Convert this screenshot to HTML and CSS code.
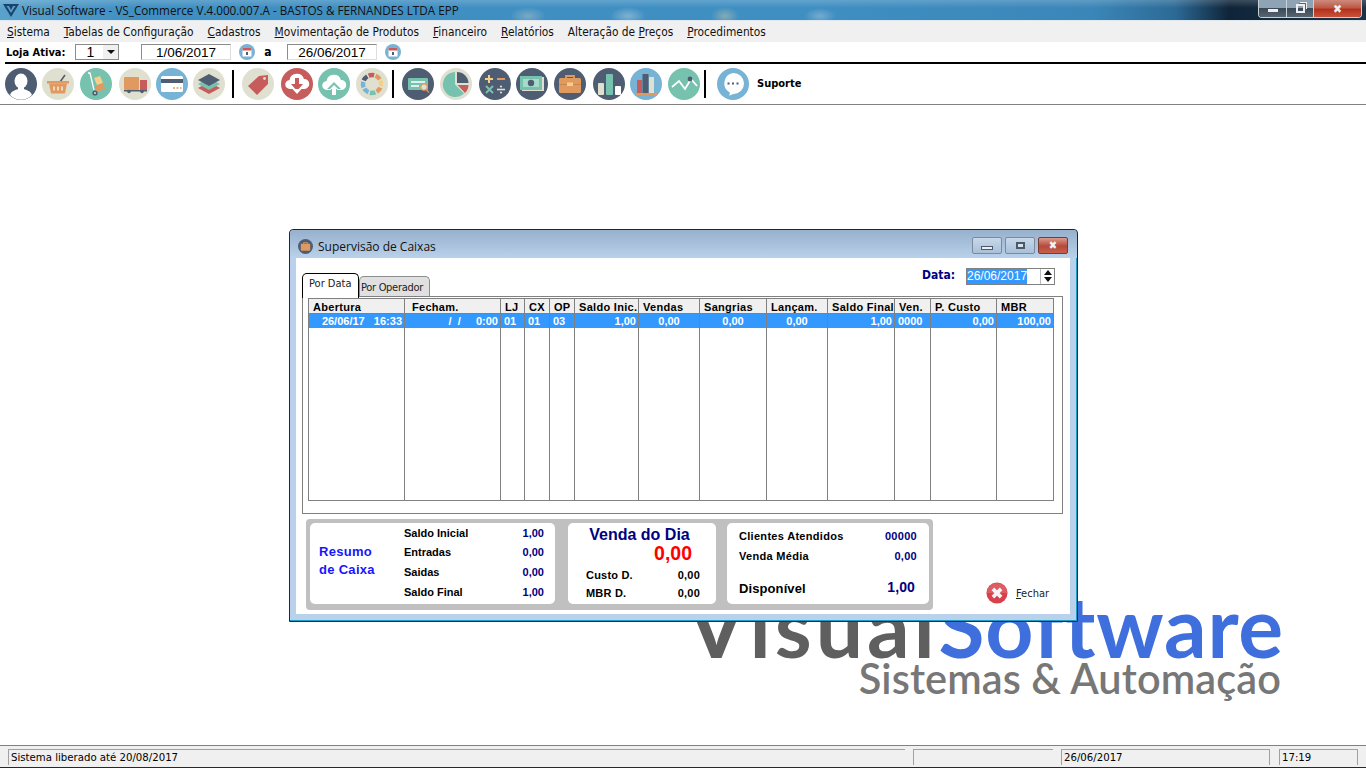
FILE: index.html
```html
<!DOCTYPE html>
<html lang="en">
<head>
    <meta charset="UTF-8">
    <title>Visual Software - VS_Commerce</title>
    <link rel="stylesheet" href="styles.css">
</head>
<body>
    <!-- Main window chrome -->
    <div class="titlebar">
        <svg class="app-logo" viewBox="0 0 16 14"><path d="M0 1h16L8 14z" fill="#16456e"/><path d="M3.500 3h9L8 10z" fill="#5f9cc6"/><path d="M6 3h4L8 7z" fill="#16456e"/></svg>
        <span class="app-title">Visual Software - VS_Commerce V.4.000.007.A - BASTOS &amp; FERNANDES LTDA EPP</span>
        <div class="caption-btns">
            <div class="cap-btn cap-min"><span class="min-glyph"></span></div>
            <div class="cap-btn cap-max"><span class="max-glyph"></span></div>
            <div class="cap-btn cap-close">&#10006;</div>
        </div>
    </div>
    <div class="menubar">
        <span><u>S</u>istema</span>
        <span><u>T</u>abelas de Configuração</span>
        <span><u>C</u>adastros</span>
        <span><u>M</u>ovimentação de Produtos</span>
        <span><u>F</u>inanceiro</span>
        <span><u>R</u>elatórios</span>
        <span>Alteração de <u>P</u>reços</span>
        <span><u>P</u>rocedimentos</span>
    </div>
    <div class="datebar">
        <span class="loja-label">Loja Ativa:</span>
        <div class="combo"><span class="combo-val">1</span><span class="combo-btn"><span class="combo-arrow"></span></span></div>
        <div class="date-input date-first">1/06/2017</div>
        <svg class="cal-icon" viewBox="0 0 16 16"><circle cx="8" cy="8" r="8" fill="#77b3d4"/><rect x="3.500" y="4" width="9" height="8.500" fill="#fff"/><rect x="3.500" y="4" width="9" height="2.500" fill="#c75c5c"/><rect x="7" y="8" width="2" height="3" fill="#4f5d73"/></svg>
        <span class="date-sep">a</span>
        <div class="date-input">26/06/2017</div>
        <svg class="cal-icon" viewBox="0 0 16 16"><circle cx="8" cy="8" r="8" fill="#77b3d4"/><rect x="3.500" y="4" width="9" height="8.500" fill="#fff"/><rect x="3.500" y="4" width="9" height="2.500" fill="#c75c5c"/><rect x="7" y="8" width="2" height="3" fill="#4f5d73"/></svg>
    </div>
    <div class="toolbar-rule"></div>
    <div class="toolbar">
        <!-- user -->
        <svg class="tool gap-5" viewBox="0 0 32 32"><circle cx="16" cy="16" r="16" fill="#4f5d73"/><ellipse cx="16" cy="13" rx="6.500" ry="7.500" fill="#fff"/><path d="M5 27c1-4 6-5 8-6v-3h6v3c2 1 7 2 8 6a15 15 0 0 1-22 0z" fill="#fff"/></svg>
        <!-- basket -->
        <svg class="tool gap-6" viewBox="0 0 32 32"><circle cx="16" cy="16" r="16" fill="#e0e0d1"/><path d="M18 14l5-7" stroke="#4f5d73" stroke-width="1.600"/><rect x="5" y="13" width="22" height="2.500" fill="#e0995e"/><path d="M7 15.500h18l-2 10H9z" fill="#e0995e"/><path d="M12 18.500v4M16 18.500v4M20 18.500v4" stroke="#f5e6d3" stroke-width="1.600"/></svg>
        <!-- dolly -->
        <svg class="tool gap-7" viewBox="0 0 32 32"><circle cx="16" cy="16" r="16" fill="#76c2af"/><path d="M8 5h2l4 17" stroke="#fff" stroke-width="1.300" fill="none"/><path d="M14 10l6-2 3 7-6 2z" fill="#f5cf87"/><path d="M15 18l8-3 2 6-8 3z" fill="#e0995e"/><circle cx="15" cy="25" r="2.600" fill="#4f5d73"/><circle cx="15" cy="25" r="1" fill="#e0e0d1"/></svg>
        <!-- truck -->
        <svg class="tool gap-5" viewBox="0 0 32 32"><circle cx="16" cy="16" r="16" fill="#e0e0d1"/><rect x="5" y="9" width="15" height="13" rx="1" fill="#e0995e"/><rect x="21" y="12" width="7" height="10" fill="#c75c5c"/><rect x="5" y="22" width="23" height="1.500" fill="#4f5d73"/><circle cx="10" cy="23.500" r="1.800" fill="#4f5d73"/><circle cx="23" cy="23.500" r="1.800" fill="#4f5d73"/></svg>
        <!-- card -->
        <svg class="tool gap-5" viewBox="0 0 32 32"><circle cx="16" cy="16" r="16" fill="#77b3d4"/><rect x="5" y="8" width="22" height="16" rx="1.500" fill="#fff"/><rect x="5" y="11" width="22" height="4" fill="#4f5d73"/><path d="M17 20h2M20.500 20h2M24 20h1.500" stroke="#e0995e" stroke-width="1.600"/></svg>
        <!-- layers -->
        <svg class="tool gap-7" viewBox="0 0 32 32"><circle cx="16" cy="16" r="16" fill="#e0e0d1"/><path d="M16 14l11 6-11 6-11-6z" fill="#c75c5c"/><path d="M16 10l11 6-11 6-11-6z" fill="#76c2af"/><path d="M16 6l11 6-11 6-11-6z" fill="#4f5d73"/></svg>
        <div class="tool-sep"></div>
        <!-- tag -->
        <svg class="tool gap-7" viewBox="0 0 32 32"><circle cx="16" cy="16" r="16" fill="#e0e0d1"/><path d="M6 18L17 8l9-1v9L15 27z" fill="#c75c5c"/><circle cx="22.500" cy="10.500" r="1.400" fill="#e0e0d1"/></svg>
        <!-- download -->
        <svg class="tool gap-5" viewBox="0 0 32 32"><circle cx="16" cy="16" r="16" fill="#c75c5c"/><path d="M9 21a4.500 4.500 0 0 1-.5-9 7.500 7.500 0 0 1 14.500-1 5 5 0 0 1 .5 10z" fill="#fff"/><path d="M14 10h4v6h4l-6 7-6-7h4z" fill="#c75c5c"/><path d="M11.500 21h9L16 26z" fill="#fff"/></svg>
        <!-- upload -->
        <svg class="tool gap-6" viewBox="0 0 32 32"><circle cx="16" cy="16" r="16" fill="#76c2af"/><path d="M9 22a4.500 4.500 0 0 1-.5-9 7.500 7.500 0 0 1 14.500-1 5 5 0 0 1 .5 10z" fill="#fff"/><path d="M16 14l7 7h-4v6h-6v-6H9z" fill="#76c2af"/><path d="M16 17l4 4h-2v6h-4v-6h-2z" fill="#fff"/></svg>
        <!-- aperture -->
        <svg class="tool gap-4" viewBox="0 0 32 32"><circle cx="16" cy="16" r="16" fill="#e0e0d1"/><g fill="none" stroke-width="4.500" stroke-dasharray="5.600 50.900"><circle cx="16" cy="16" r="9" stroke="#c75c5c" transform="rotate(-112 16 16)"/><circle cx="16" cy="16" r="9" stroke="#e0995e" transform="rotate(-67 16 16)"/><circle cx="16" cy="16" r="9" stroke="#f5cf87" transform="rotate(-22 16 16)"/><circle cx="16" cy="16" r="9" stroke="#e0995e" transform="rotate(23 16 16)"/><circle cx="16" cy="16" r="9" stroke="#76c2af" transform="rotate(68 16 16)"/><circle cx="16" cy="16" r="9" stroke="#77b3d4" transform="rotate(113 16 16)"/><circle cx="16" cy="16" r="9" stroke="#77b3d4" transform="rotate(158 16 16)"/><circle cx="16" cy="16" r="9" stroke="#4f5d73" transform="rotate(203 16 16)"/></g></svg>
        <div class="tool-sep"></div>
        <!-- id search -->
        <svg class="tool gap-6" viewBox="0 0 32 32"><circle cx="16" cy="16" r="16" fill="#4f5d73"/><rect x="6" y="10" width="20" height="12" rx="1" fill="#76c2af"/><path d="M9 14h14M9 18h8" stroke="#fff" stroke-width="1.600"/><circle cx="22" cy="19" r="3.200" fill="#e0e0d1" stroke="#e0995e" stroke-width="1.200"/><path d="M24 21.500l3 3" stroke="#e0995e" stroke-width="1.300"/></svg>
        <!-- pie -->
        <svg class="tool gap-7" viewBox="0 0 32 32"><circle cx="16" cy="16" r="16" fill="#e0e0d1"/><path d="M15 4a12.500 12.500 0 1 0 9 21.500l-9-9z" fill="#76c2af"/><path d="M17 4v11h11.500A11.500 11.500 0 0 0 17 4z" fill="#4f5d73"/><path d="M17.500 17h11a11.500 11.500 0 0 1-3.500 8z" fill="#c75c5c"/></svg>
        <!-- calculator signs -->
        <svg class="tool gap-5" viewBox="0 0 32 32"><circle cx="16" cy="16" r="16" fill="#4f5d73"/><path d="M6 11h8M10 7v8" stroke="#f5cf87" stroke-width="2"/><path d="M18 11h8" stroke="#e0995e" stroke-width="2"/><path d="M7 18l7 7M14 18l-7 7" stroke="#76c2af" stroke-width="2"/><path d="M18 21.500h8" stroke="#e0e0d1" stroke-width="1.600"/><circle cx="22" cy="18.500" r="1.100" fill="#e0e0d1"/><circle cx="22" cy="24.500" r="1.100" fill="#e0e0d1"/></svg>
        <!-- money -->
        <svg class="tool gap-6" viewBox="0 0 32 32"><circle cx="16" cy="16" r="16" fill="#4f5d73"/><rect x="6" y="9" width="22" height="14" fill="#e0e0d1"/><rect x="4" y="8" width="22" height="14" fill="#76c2af"/><rect x="7" y="11" width="16" height="8" fill="#a5dcc9"/><circle cx="15" cy="15" r="3.200" fill="#4f5d73"/></svg>
        <!-- briefcase -->
        <svg class="tool gap-7" viewBox="0 0 32 32"><circle cx="16" cy="16" r="16" fill="#4f5d73"/><path d="M12 11V8h8v3" fill="none" stroke="#e0995e" stroke-width="1.800"/><rect x="5" y="10" width="22" height="15" rx="1.500" fill="#e0995e"/><rect x="5" y="16" width="22" height="1" fill="#c9874f"/><rect x="13" y="14.500" width="6" height="3.500" fill="#f5cf87"/></svg>
        <!-- bars -->
        <svg class="tool gap-5" viewBox="0 0 32 32"><circle cx="16" cy="16" r="16" fill="#4f5d73"/><rect x="5" y="15" width="6" height="12" rx="1" fill="#e0e0d1"/><rect x="13" y="6" width="7" height="21" rx="1" fill="#76c2af"/><rect x="22" y="18" width="6" height="9" rx="1" fill="#fff"/></svg>
        <!-- books -->
        <svg class="tool gap-6" viewBox="0 0 32 32"><circle cx="16" cy="16" r="16" fill="#77b3d4"/><rect x="7" y="12" width="5" height="13" fill="#c75c5c"/><rect x="12.500" y="6" width="6" height="19" fill="#4f5d73"/><rect x="19" y="9" width="5" height="16" fill="#e0e0d1"/><rect x="6" y="25" width="21" height="2" fill="#e0995e"/></svg>
        <!-- line chart -->
        <svg class="tool gap-4" viewBox="0 0 32 32"><circle cx="16" cy="16" r="16" fill="#76c2af"/><path d="M4 19l7-6 6 8 6-10 6 7" fill="none" stroke="#fff" stroke-width="1.800"/><circle cx="22" cy="11" r="2.400" fill="#4f5d73"/></svg>
        <div class="tool-sep sep-last"></div>
        <!-- chat -->
        <svg class="tool" viewBox="0 0 32 32"><circle cx="16" cy="16" r="16" fill="#77b3d4"/><path d="M16 5a10.500 10.500 0 0 1 1 21c-2 .2-3 1.500-5 1.500 1-1.500 1-2.300.7-3A10.500 10.500 0 0 1 16 5z" fill="#fff"/><path d="M10.500 15.500h2M15 15.500h2M19.500 15.500h2" stroke="#4f5d73" stroke-width="2"/></svg>
        <span class="tool-label">Suporte</span>
    </div>

    <div class="desktop">
        <div class="logo-main"><span class="logo-visual">Visual</span><span class="logo-soft">Software</span></div>
        <div class="logo-sub">Sistemas &amp; Automação</div>

        <!-- Supervisão de Caixas dialog -->
        <div class="dialog">
            <div class="dialog-title">
                <svg class="dialog-icon" viewBox="0 0 32 32"><circle cx="16" cy="16" r="16" fill="#4f5d73"/><rect x="6" y="10" width="20" height="15" rx="1.500" fill="#e0995e"/><path d="M12 11V8h8v3" fill="none" stroke="#e0995e" stroke-width="2"/></svg>
                <span class="dialog-caption">Supervisão de Caixas</span>
                <div class="dlg-btns">
                    <div class="dlg-btn"><span class="dlg-min"></span></div>
                    <div class="dlg-btn"><span class="dlg-max"></span></div>
                    <div class="dlg-btn dlg-close">&#10006;</div>
                </div>
            </div>
            <div class="dialog-body">
                <div class="tabs-row">
                    <div class="tabs">
                        <div class="tab tab-active">Por Data</div>
                        <div class="tab tab-back">Por Operador</div>
                    </div>
                    <div class="date-filter">
                        <span class="date-filter-label">Data:</span>
                        <div class="spin-input">
                            <span class="spin-text">26/06/2017</span>
                            <div class="spin-btns"><span class="spin-up"></span><span class="spin-down"></span></div>
                        </div>
                    </div>
                </div>
                <div class="tab-panel">
                    <table class="caixas">
                        <colgroup>
                            <col class="w96"><col class="w96"><col class="w24"><col class="w25"><col class="w25"><col class="w64"><col class="w61"><col class="w67"><col class="w61"><col class="w67"><col class="w36"><col class="w66"><col class="w57">
                        </colgroup>
                        <thead>
                            <tr>
                                <th>Abertura</th><th class="th-fecham">Fecham.</th><th>LJ</th><th>CX</th><th>OP</th><th>Saldo Inic.</th><th>Vendas</th><th>Sangrias</th><th>Lançam.</th><th>Saldo Final</th><th>Ven.</th><th>P. Custo</th><th>MBR</th>
                            </tr>
                        </thead>
                        <tbody>
                            <tr class="row-selected">
                                <td class="num">26/06/17&nbsp;&nbsp; 16:33</td><td class="num">/&nbsp; /&nbsp;&nbsp;&nbsp;&nbsp; 0:00</td><td>01</td><td>01</td><td>03</td><td class="num">1,00</td><td class="mid">0,00</td><td class="mid">0,00</td><td class="mid">0,00</td><td class="num">1,00</td><td>0000</td><td class="num">0,00</td><td class="num">100,00</td>
                            </tr>
                            <tr class="row-fill">
                                <td></td><td></td><td></td><td></td><td></td><td></td><td></td><td></td><td></td><td></td><td></td><td></td><td></td>
                            </tr>
                        </tbody>
                    </table>
                </div>
                <div class="bottom-row">
                    <div class="summary">
                        <div class="card card-resumo">
                            <div class="resumo-title">Resumo<br>de Caixa</div>
                            <div class="resumo-rows">
                                <div class="sum-row"><span>Saldo Inicial</span><span class="val">1,00</span></div>
                                <div class="sum-row"><span>Entradas</span><span class="val">0,00</span></div>
                                <div class="sum-row"><span>Saidas</span><span class="val">0,00</span></div>
                                <div class="sum-row"><span>Saldo Final</span><span class="val">1,00</span></div>
                            </div>
                        </div>
                        <div class="card card-venda">
                            <div class="venda-title">Venda do Dia</div>
                            <div class="venda-total">0,00</div>
                            <div class="venda-row"><span>Custo D.</span><span>0,00</span></div>
                            <div class="venda-row"><span>MBR D.</span><span>0,00</span></div>
                        </div>
                        <div class="card card-clientes">
                            <div class="sum-row"><span>Clientes Atendidos</span><span class="val">00000</span></div>
                            <div class="sum-row"><span>Venda Média</span><span class="val">0,00</span></div>
                            <div class="sum-row sum-big"><span>Disponível</span><span class="val">1,00</span></div>
                        </div>
                    </div>
                    <div class="fechar">
                        <svg class="fechar-icon" viewBox="0 0 24 24"><circle cx="12" cy="12" r="11.500" fill="#d8404a"/><path d="M1 12a11 11 0 0 1 22 0z" fill="#fff" opacity="0.15"/><path d="M7.500 7.500l9 9M16.500 7.500l-9 9" stroke="#f4f4f4" stroke-width="4"/></svg>
                        <span><u>F</u>echar</span>
                    </div>
                </div>
            </div>
        </div>
    </div>

    <div class="statusbar">
        <div class="status-cell st-msg">Sistema liberado até 20/08/2017</div>
        <div class="status-cell st-empty"></div>
        <div class="status-cell st-date">26/06/2017</div>
        <div class="status-cell st-time">17:19</div>
    </div>
</body>
</html>
```

FILE: styles.css
```css
html, body {
    margin: 0;
    height: 100%;
}
body {
    width: 1366px;
    height: 768px;
    overflow: hidden;
    display: flex;
    flex-direction: column;
    background: #fff;
    color: #000;
    font-family: 'DejaVu Sans Condensed', 'Noto Sans', sans-serif;
    font-size: 12px;
}

/* Title bar */
.titlebar {
    height: 21px;
    flex: none;
    display: flex;
    align-items: flex-start;
    box-sizing: border-box;
    border-bottom: 1px solid #dfe8ee;
    background:
        radial-gradient(ellipse 18px 9px at 528px 16px, rgba(170,190,200,0.55), transparent),
        radial-gradient(ellipse 18px 9px at 628px 16px, rgba(170,200,220,0.6), transparent),
        radial-gradient(ellipse 14px 9px at 725px 16px, rgba(180,190,170,0.6), transparent),
        radial-gradient(ellipse 16px 8px at 820px 16px, rgba(170,200,220,0.5), transparent),
        linear-gradient(rgba(255,255,255,0.18), transparent 40%),
        linear-gradient(90deg, #5aa2cc 0, #3f8fc2 10%, #3f8fc2 60%, #3b86b8 80%, #2c6a96 86%, #0f2438 90%, #12283c 92%, #1c3348 100%);
}
.app-logo {
    width: 16px;
    height: 14px;
    margin: 3px 3px 0 3px;
}
.app-title {
    font-family: 'Open Sans', 'Noto Sans', sans-serif;
    font-size: 11.7px;
    line-height: 21px;
    color: #111;
}
.caption-btns {
    margin-left: auto;
    margin-right: 4px;
    display: flex;
    height: 17px;
    border: 1px solid #c8d0d8;
    border-top: none;
    border-radius: 0 0 4px 4px;
    overflow: hidden;
}
.cap-btn {
    display: flex;
    align-items: center;
    justify-content: center;
    color: #eee;
    box-sizing: border-box;
}
.cap-min {
    width: 28px;
    background: linear-gradient(#8ea3b3, #8ea3b3 45%, #3b4a58 50%, #57656f);
    border-right: 1px solid #c8d0d8;
}
.cap-max {
    width: 27px;
    background: linear-gradient(#8ea3b3, #8ea3b3 45%, #3b4a58 50%, #57656f);
    border-right: 1px solid #c8d0d8;
}
.cap-close {
    width: 47px;
    font-size: 12px;
    background: linear-gradient(#cf8a7c, #bb5a48 45%, #b5301a 55%, #c8523a);
}
.min-glyph {
    width: 10px;
    height: 3px;
    background: #eee;
    margin-top: 4px;
}
.max-glyph {
    width: 5px;
    height: 5px;
    border: 2px solid #eee;
    box-shadow: 2px -2px 0 -1px #57656f, 3px -3px 0 -1px #eee;
}

/* Menu */
.menubar {
    height: 21px;
    flex: none;
    background: #f0f0f0;
    display: flex;
    gap: 14px;
    padding-left: 7px;
    font-size: 11.8px;
    line-height: 22px;
    color: #111;
}

/* Date row */
.datebar {
    height: 20px;
    flex: none;
    display: flex;
    align-items: center;
    padding-left: 6px;
}
.loja-label {
    font-weight: bold;
    font-size: 11px;
    width: 69px;
}
.combo {
    width: 44px;
    height: 16px;
    box-sizing: border-box;
    border: 1px solid #8c8c8c;
    display: flex;
    align-items: center;
    font-family: 'Liberation Sans', sans-serif;
    font-size: 14px;
}
.combo-val {
    flex: 1;
    text-align: center;
    padding-left: 2px;
}
.combo-btn {
    width: 15px;
    height: 14px;
    background: #f0f0f0;
    display: flex;
    align-items: center;
    justify-content: center;
}
.combo-arrow {
    width: 0;
    height: 0;
    border-left: 4px solid transparent;
    border-right: 4px solid transparent;
    border-top: 4px solid #111;
}
.date-input {
    width: 90px;
    height: 16px;
    box-sizing: border-box;
    border: 1px solid #8c8c8c;
    border-bottom-color: #ddd;
    border-right-color: #ddd;
    text-align: center;
    font-family: 'Liberation Sans', sans-serif;
    font-size: 13.5px;
    line-height: 16px;
}
.date-first {
    margin-left: 22px;
}
.cal-icon {
    width: 16px;
    height: 16px;
    margin-left: 8px;
}
.date-sep {
    font-weight: bold;
    width: 18px;
    text-align: center;
    margin-left: 4px;
    margin-right: 10px;
}

/* Toolbar */
.toolbar-rule {
    height: 2px;
    flex: none;
    margin-left: 5px;
    background: #000;
}
.toolbar {
    height: 41px;
    flex: none;
    box-sizing: border-box;
    border-bottom: 1px solid #808080;
    display: flex;
    align-items: center;
    padding-left: 5px;
    padding-bottom: 1px;
}
.tool {
    width: 32px;
    height: 32px;
    flex: none;
}
.gap-4 { margin-right: 4px; }
.gap-5 { margin-right: 5px; }
.gap-6 { margin-right: 6px; }
.gap-7 { margin-right: 7px; }
.tool-sep {
    width: 2px;
    height: 28px;
    background: #000;
    margin-right: 8px;
    flex: none;
}
.sep-last { margin-right: 11px; }
.tool-label {
    margin-left: 8px;
    font-size: 11px;
    font-weight: bold;
}

/* Desktop area with the watermark */
.desktop {
    flex: 1;
    position: relative;
    display: flex;
    flex-direction: column;
    align-items: flex-end;
    padding: 491px 82px 0 0;
    overflow: hidden;
}
.logo-main {
    font-family: Lato, sans-serif;
    font-weight: 700;
    font-size: 84px;
    line-height: 60px;
}
.logo-visual {
    color: #5f5f5f;
    letter-spacing: 4px;
}
.logo-soft {
    color: #3f6fdc;
    letter-spacing: 0.8px;
}
.logo-sub {
    font-family: Lato, sans-serif;
    font-weight: 600;
    font-size: 41.5px;
    line-height: 36px;
    letter-spacing: 0.1px;
    color: #777;
    margin: 4px 3px 0 0;
}

/* Dialog */
.dialog {
    position: absolute;
    left: 289px;
    top: 124px;
    width: 789px;
    height: 393px;
    box-sizing: border-box;
    border: 1px solid #1b2a3a;
    border-radius: 4px 4px 0 0;
    box-shadow: inset -1px -1px 0 #1aa0c8;
    background: #b9d1ea;
    padding: 0 7px 7px 6px;
    display: flex;
    flex-direction: column;
}
.dialog-title {
    height: 28px;
    flex: none;
    display: flex;
    align-items: center;
    margin: 0 -7px 0 -6px;
    padding: 4px 9px 0 8px;
    box-sizing: border-box;
    background: linear-gradient(#97b0cc, #b9d1ea);
    border-radius: 4px 4px 0 0;
}
.dialog-icon {
    width: 15px;
    height: 15px;
    margin-right: 5px;
}
.dialog-caption {
    font-family: 'Open Sans', 'Noto Sans', sans-serif;
    font-size: 12px;
    color: #111;
}
.dlg-btns {
    margin-left: auto;
    display: flex;
    gap: 3px;
    margin-top: -1px;
}
.dlg-btn {
    width: 30px;
    height: 17px;
    box-sizing: border-box;
    border: 1px solid #7a8ba0;
    border-radius: 2px;
    background: linear-gradient(#c8d8e8, #a9c0d8);
    display: flex;
    align-items: center;
    justify-content: center;
}
.dlg-close {
    background: linear-gradient(#dc9a8e, #b5483a 55%, #c8604e);
    border-color: #7a3a30;
    color: #f4f4f4;
    font-size: 11px;
}
.dlg-min {
    width: 10px;
    height: 2px;
    margin-top: 4px;
    background: #eee;
    border: 1px solid #4a5a6a;
}
.dlg-max {
    width: 5px;
    height: 3px;
    background: #d8e2ec;
    border: 2px solid #4a5a6a;
}
.dialog-body {
    flex: 1;
    background: #fff;
    display: flex;
    flex-direction: column;
    padding-left: 6px;
}

/* Tabs and date filter */
.tabs-row {
    height: 39px;
    flex: none;
    display: flex;
    justify-content: space-between;
    padding-right: 15px;
    margin-bottom: -1px;
}
.tabs {
    display: flex;
    align-items: flex-end;
    padding-top: 15px;
}
.tab {
    height: 21px;
    box-sizing: border-box;
    padding: 0 1px;
    width: 71px;
    border: 1px solid #8c8c8c;
    border-bottom: none;
    border-radius: 5px 5px 0 0;
    background: #e0e0e0;
    font-size: 11px;
    line-height: 22px;
    color: #222;
    white-space: nowrap;
}
.tab-back {
    letter-spacing: -0.3px;
}
.tab-active {
    width: 57px;
    height: 25px;
    padding-left: 6px;
    background: #fff;
    border-color: #000;
    position: relative;
    z-index: 1;
    top: 1px;
    line-height: 20px;
}
.date-filter {
    display: flex;
    padding-top: 9px;
    height: 18px;
    align-items: center;
}
.date-filter-label {
    color: #000080;
    font-weight: bold;
    margin-right: 11px;
    margin-top: -2px;
}
.spin-input {
    width: 89px;
    height: 17px;
    box-sizing: border-box;
    border: 1px solid #808080;
    display: flex;
}
.spin-text {
    width: 60px;
    background: #3399ff;
    color: #fff;
    font-family: 'Liberation Sans', sans-serif;
    font-size: 12px;
    line-height: 15px;
    white-space: nowrap;
    overflow: hidden;
}
.spin-btns {
    margin-left: auto;
    width: 13px;
    border-left: 1px solid #bbb;
    display: flex;
    flex-direction: column;
    align-items: center;
    justify-content: space-around;
}
.spin-up {
    border-left: 4px solid transparent;
    border-right: 4px solid transparent;
    border-bottom: 5px solid #111;
}
.spin-down {
    border-left: 4px solid transparent;
    border-right: 4px solid transparent;
    border-top: 5px solid #111;
}

/* Grid */
.tab-panel {
    width: 761px;
    height: 218px;
    flex: none;
    box-sizing: border-box;
    border: 1px solid #808080;
    padding: 1px 8px 12px 5px;
}
.caixas {
    border-collapse: collapse;
    table-layout: fixed;
    width: 746px;
    height: 203px;
    font-family: 'Liberation Sans', sans-serif;
    font-size: 11px;
    font-weight: bold;
    border: 1px solid #808080;
}
.w96 { width: 96px; }
.w24 { width: 24px; }
.w25 { width: 25px; }
.w36 { width: 36px; }
.w57 { width: 57px; }
.w61 { width: 61px; }
.w64 { width: 64px; }
.w66 { width: 66px; }
.w67 { width: 67px; }
.caixas th {
    height: 14px;
    padding: 2px 0 0 4px;
    box-sizing: border-box;
    background: #f0f0f0;
    text-align: left;
    letter-spacing: 0.3px;
    border-right: 1px solid #808080;
    border-bottom: 1px solid #808080;
    white-space: nowrap;
    overflow: hidden;
}
.caixas th.th-fecham {
    padding-left: 7px;
}
.caixas td {
    padding: 0 0 0 3px;
    border-right: 1px solid #808080;
    white-space: nowrap;
    overflow: hidden;
}
.row-selected td {
    height: 14px;
    background: #3399ff;
    color: #fff;
}
.caixas td.num {
    text-align: right;
    padding: 0 2px 0 0;
}
.caixas td.mid {
    text-align: center;
    padding: 0;
}

/* Bottom summary */
.bottom-row {
    display: flex;
    padding: 5px 0 0 4px;
}
.summary {
    width: 627px;
    height: 91px;
    flex: none;
    box-sizing: border-box;
    background: #c0c0c0;
    border-radius: 4px;
    padding: 4px 4px 6px;
    display: flex;
    font-family: 'Liberation Sans', sans-serif;
    font-size: 11px;
    font-weight: bold;
}
.card {
    background: #fff;
    border-radius: 5px;
    box-sizing: border-box;
}
.card-resumo {
    width: 245px;
    display: flex;
    padding: 0 11px 0 9px;
    align-items: stretch;
}
.resumo-title {
    width: 85px;
    flex: none;
    color: #1515ff;
    font-size: 13px;
    line-height: 18px;
    padding-top: 20px;
    letter-spacing: 0.3px;
}
.resumo-rows {
    flex: 1;
    display: flex;
    flex-direction: column;
}
.sum-row {
    display: flex;
    justify-content: space-between;
    align-items: center;
    height: 20px;
}
.resumo-rows .sum-row {
    height: 19.6px;
}
.val {
    color: #000080;
}
.card-venda {
    width: 148px;
    margin-left: 13px;
    padding: 0 16px 0 18px;
}
.venda-title {
    color: #000080;
    font-size: 16px;
    line-height: 19px;
    text-align: center;
    margin: 2px 3px 0 -4px;
}
.venda-total {
    color: #ff0000;
    font-size: 19.5px;
    line-height: 20px;
    text-align: right;
    margin: -1px 8px 3px 0;
}
.venda-row {
    display: flex;
    justify-content: space-between;
    align-items: center;
    height: 18px;
    letter-spacing: 0.2px;
}
.card-clientes {
    width: 202px;
    margin-left: 11px;
    padding: 3px 12px 0 12px;
    letter-spacing: 0.3px;
}
.sum-big {
    margin-top: 12px;
    font-size: 13px;
    letter-spacing: 0.1px;
}
.sum-big .val {
    font-size: 14px;
    margin: -3px 2px 0 0;
}
.fechar {
    display: flex;
    align-items: center;
    gap: 8px;
    margin: 63px 0 0 53px;
    height: 22px;
    font-size: 11px;
    color: #222;
    white-space: nowrap;
}
.fechar-icon {
    width: 22px;
    height: 22px;
}

/* Status bar */
.statusbar {
    height: 23px;
    flex: none;
    box-sizing: border-box;
    border-top: 1px solid #808080;
    border-bottom: 1px solid #1d2a38;
    background: #f0f0f0;
    display: flex;
    padding: 3px 0 0 8px;
    gap: 8px;
    font-size: 11.3px;
}
.status-cell {
    height: 16px;
    box-sizing: border-box;
    border-top: 1px solid #a0a0a0;
    border-left: 1px solid #a0a0a0;
    padding-left: 2px;
    line-height: 16px;
    white-space: nowrap;
}
.st-msg { width: 897px; }
.st-empty { width: 140px; }
.st-date { width: 209px; border-right: 1px solid #a0a0a0; }
.st-time { width: 79px; margin-left: 1px; border-right: 1px solid #a0a0a0; }
```
